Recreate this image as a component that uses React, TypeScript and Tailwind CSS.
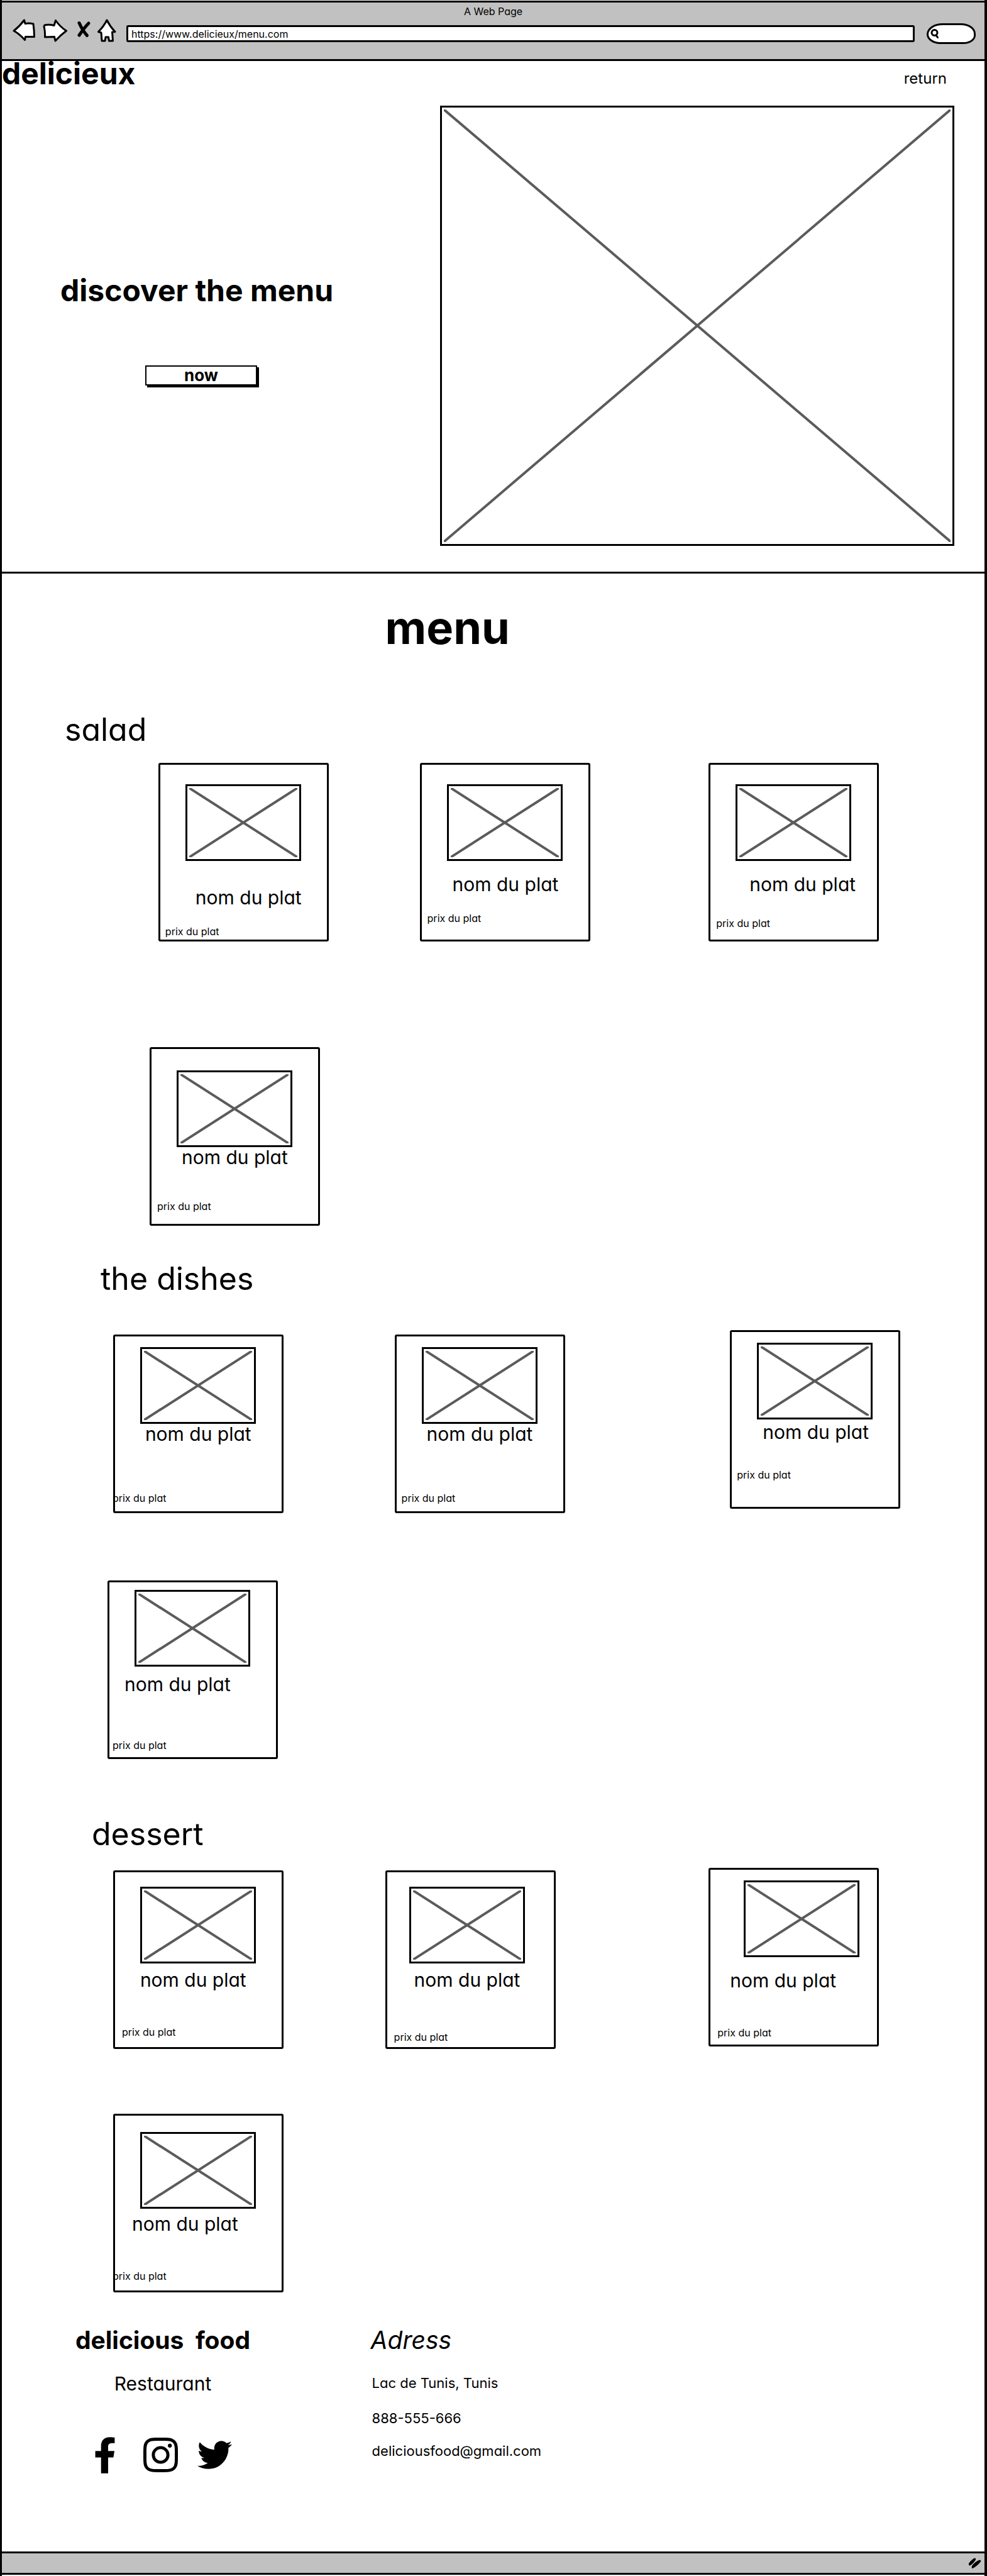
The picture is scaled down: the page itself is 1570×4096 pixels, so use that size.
import React from "react";
import { FaFacebookF, FaInstagram, FaTwitter } from "react-icons/fa";

type Dish = {
  card: string;
  image: string;
  name: string;
  price: string;
};

const salads: Dish[] = [
  { card: "col-start-2", image: "mt-[31px] ml-[40px]", name: "mt-[42px] ml-[56px]", price: "mt-[28px] ml-[8px]" },
  { card: "", image: "mt-[31px] ml-[40px]", name: "mt-[21px] ml-[49px]", price: "mt-[28px] ml-[9px]" },
  { card: "", image: "mt-[31px] ml-[40px]", name: "mt-[21px] ml-[62px]", price: "mt-[36px] ml-[9px]" },
];
const lastSalad: Dish = { card: "", image: "mt-[34px] ml-[40px]", name: "ml-[48px]", price: "mt-[52px] ml-[9px]" };

const dishes: Dish[] = [
  { card: "col-start-2 mt-[7px]", image: "mt-[17px] ml-[40px]", name: "ml-[48px]", price: "mt-[76px] -ml-[4px]" },
  { card: "mt-[7px]", image: "mt-[17px] ml-[40px]", name: "ml-[48px]", price: "mt-[76px] ml-[8px]" },
  { card: "", image: "mt-[17px] ml-[40px]", name: "mt-[4px] ml-[49px]", price: "mt-[42px] ml-[8px]" },
];
const lastDish: Dish = { card: "", image: "mt-[12px] ml-[40px]", name: "mt-[12px] ml-[24px]", price: "mt-[71px] ml-[5px]" };

const desserts: Dish[] = [
  { card: "col-start-2 mt-[4px]", image: "mt-[23px] ml-[40px]", name: "mt-[10px] ml-[40px]", price: "mt-[57px] ml-[11px]" },
  { card: "mt-[4px]", image: "mt-[23px] ml-[35px]", name: "mt-[10px] ml-[43px]", price: "mt-[65px] ml-[11px]" },
  { card: "", image: "mt-[17px] ml-[53px]", name: "mt-[21px] ml-[31px]", price: "mt-[57px] ml-[11px]" },
];
const lastDessert: Dish = { card: "", image: "mt-[26px] ml-[40px]", name: "mt-[8px] ml-[27px]", price: "mt-[57px] -ml-[4px]" };

function Placeholder({ className }: { className: string }) {
  return (
    <div className={`border-[3px] border-black p-[3px] ${className}`} role="img" aria-label="image placeholder">
      <svg className="block h-full w-full" stroke="#5b5b5b" strokeWidth="4">
        <line x1="0" y1="0" x2="100%" y2="100%" />
        <line x1="100%" y1="0" x2="0" y2="100%" />
      </svg>
    </div>
  );
}

function DishCard({ dish }: { dish: Dish }) {
  return (
    <article className={`flex min-h-[284px] w-[271px] flex-col items-start rounded-[3px] border-[3px] border-black ${dish.card}`}>
      <Placeholder className={`h-[122px] w-[184px] ${dish.image}`} />
      <h3 className={`text-[30px] leading-[32px] whitespace-nowrap ${dish.name}`}>nom du plat</h3>
      <p className={`text-[16px] leading-[20px] whitespace-nowrap ${dish.price}`}>prix du plat</p>
    </article>
  );
}

function BrowserBar() {
  return (
    <header className="mt-px border-y-[3px] border-black bg-[#c1c1c1] pt-[4px] pb-[24px]">
      <p className="text-center text-[16px] leading-[20px]">A Web Page</p>
      <div className="mt-[2px] flex h-[40px] items-start pr-[14px] pl-[17px]">
        <button type="button" aria-label="Back" className="mr-[10px]">
          <svg className="block" width="38" height="37" viewBox="20 30 38 37" fill="#fff" stroke="#000" strokeWidth="3" strokeLinejoin="round">
            <path d="M22 49Q31 42 38.500 32L40 37.500Q47 36.500 53 38Q54.500 49 54.500 58.500L40.500 58.500L39.500 63.500Q31 54 22 49Z" />
          </svg>
        </button>
        <button type="button" aria-label="Forward" className="mr-[14px]">
          <svg className="block" width="40" height="37" viewBox="68 30 40 37" fill="#fff" stroke="#000" strokeWidth="3" strokeLinejoin="round">
            <path d="M71 40Q78 38.500 86 40.500L88.500 32.500Q96 43 105.500 49Q96 56 88 65L86.500 58.500L71.500 59Q72 50 70 42Z" />
          </svg>
        </button>
        <button type="button" aria-label="Stop" className="mr-[9px]">
          <svg className="block" width="23" height="37" viewBox="122 30 23 37" fill="none" stroke="#000" strokeWidth="5" strokeLinecap="round">
            <path d="M126 36.500Q131 48 138.500 56.500M141 37Q134 44 126 56" />
          </svg>
        </button>
        <button type="button" aria-label="Home" className="mr-[15px]">
          <svg className="block" width="32" height="37" viewBox="154 30 32 37" fill="#fff" stroke="#000" strokeWidth="3" strokeLinejoin="round">
            <path d="M170 32Q175 42 183 50.500L178.500 51L179.500 65L173.500 65L172.500 59L168 59L167 65L162 65L161 52L156.500 50.500Q165 42 170 32Z" />
          </svg>
        </button>
        <input
          type="text"
          aria-label="Address"
          defaultValue="https://www.delicieux/menu.com"
          className="mt-[10px] h-[27px] min-w-0 flex-1 rounded-[3px] border-[3px] border-black bg-white px-[5px] text-[16px] leading-[20px] outline-none"
        />
        <button
          type="button"
          aria-label="Search"
          className="mt-[7px] ml-[19px] flex h-[33px] w-[78px] items-center rounded-[26px_24px_20px_22px/18px_17px_14px_16px] border-[3px] border-black bg-white pl-[3px]"
        >
          <svg width="14" height="16" viewBox="0 0 14 16" fill="none" stroke="#000" strokeWidth="3" strokeLinecap="round">
            <ellipse cx="6.500" cy="6" rx="4.500" ry="4.500" />
            <path d="M9 10L11.500 13.500" />
          </svg>
        </button>
      </div>
    </header>
  );
}

export default function App() {
  return (
    <div className="flex min-h-screen flex-col border-r-[4px] border-l-[3px] border-black bg-white font-[Inter,sans-serif] text-black [font-feature-settings:'cv11']">
      <BrowserBar />

      <nav className="flex h-[44px] items-start justify-between pr-[60px]">
        <span className="text-[48px] leading-[40px] font-bold">delicieux</span>
        <a href="#" className="mt-[14px] text-[24px] leading-[28px]">return</a>
      </nav>

      <section className="grid grid-cols-[697fr_819fr_48fr] border-b-[3px] border-black pt-[27px] pb-[41px]">
        <div className="flex flex-col items-start pt-[266px]">
          <h1 className="ml-[93px] text-[48px] leading-[56px] font-bold whitespace-nowrap">discover the menu</h1>
          <button
            type="button"
            className="mt-[91px] ml-[228px] flex h-[32px] w-[178px] items-center justify-center border-2 border-black text-[26px] leading-[28px] font-bold shadow-[3px_3px_0_#000]"
          >
            now
          </button>
        </div>
        <Placeholder className="aspect-[819/700] w-full" />
      </section>

      <main className="flex-1">
        <h2 className="mt-[46px] pl-[39%] text-[72px] leading-[80px] font-bold">menu</h2>

        <section>
          <h2 className="mt-[94px] pl-[100px] text-[50px] leading-[56px]">salad</h2>
          <div className="mt-[25px] grid grid-cols-[249fr_416fr_460fr_439fr] items-start">
            {salads.map((dish, i) => <DishCard key={i} dish={dish} />)}
          </div>
          <div className="mt-[168px] pl-[235px]">
            <DishCard dish={lastSalad} />
          </div>
        </section>

        <section>
          <h2 className="mt-[56px] pl-[157px] text-[50px] leading-[56px]">the dishes</h2>
          <div className="mt-[54px] grid grid-cols-[177fr_448fr_534fr_405fr] items-start">
            {dishes.map((dish, i) => <DishCard key={i} dish={dish} />)}
          </div>
          <div className="mt-[107px] pl-[168px]">
            <DishCard dish={lastDish} />
          </div>
        </section>

        <section>
          <h2 className="mt-[91px] pl-[143px] text-[50px] leading-[56px]">dessert</h2>
          <div className="mt-[26px] grid grid-cols-[177fr_433fr_515fr_439fr] items-start">
            {desserts.map((dish, i) => <DishCard key={i} dish={dish} />)}
          </div>
          <div className="mt-[103px] pl-[177px]">
            <DishCard dish={lastDessert} />
          </div>
        </section>
      </main>

      <footer className="mt-[54px] grid grid-cols-[117fr_470fr_977fr] pb-[122px]">
        <div className="col-start-2 flex w-fit flex-col items-center">
          <p className="text-[39px] leading-[44px] font-bold whitespace-pre">delicious  food</p>
          <p className="mt-[31px] text-[30px] leading-[32px]">Restaurant</p>
          <div className="mt-[66px] flex items-center">
            <a href="#" aria-label="Facebook"><FaFacebookF className="h-[58px] w-[36px]" /></a>
            <a href="#" aria-label="Instagram" className="ml-[43px]"><FaInstagram className="h-[63px] w-[55px]" /></a>
            <a href="#" aria-label="Twitter" className="ml-[31px]"><FaTwitter className="h-[55px] w-[55px]" /></a>
          </div>
        </div>
        <address className="not-italic">
          <p className="text-[39px] leading-[44px] italic">Adress</p>
          <p className="mt-[32px] ml-[2px] text-[22px] leading-[28px]">Lac de Tunis, Tunis</p>
          <p className="mt-[28px] ml-[2px] text-[22px] leading-[28px]">888-555-666</p>
          <p className="mt-[24px] ml-[2px] text-[22px] leading-[28px]">deliciousfood@gmail.com</p>
        </address>
      </footer>

      <div className="mb-[2px] flex h-[37px] items-center justify-end border-y-[3px] border-black bg-[#c1c1c1] pr-[4px]">
        <svg width="22" height="18" viewBox="0 0 22 18" aria-hidden="true">
          <path d="M1 9Q5 3 10 .500Q13 .500 12 3Q8 10 2.500 12.500Q.500 12 1 9Z" />
          <path d="M6 13Q11 6 18 3.500Q21 3.500 20 6Q15 13 7 17Q5 16 6 13Z" />
        </svg>
      </div>
    </div>
  );
}
